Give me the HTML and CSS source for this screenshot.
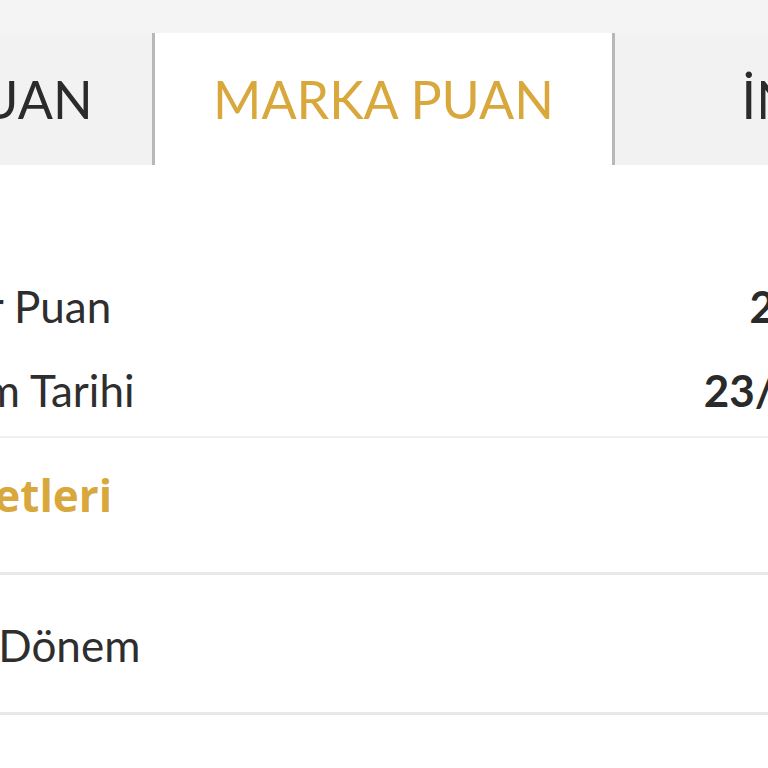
FILE: index.html
```html
<!DOCTYPE html>
<html lang="tr">
  <head>
    <meta charset='utf-8'>
    <meta name='viewport' content='width=device-width, initial-scale=1'>
    <title>Marka Puan</title>
<link rel="stylesheet" href="styles.css">
</head>
<body>

<div class="frame">
  <div class="page">

    <div class="topbar"></div>

    <nav class="tabs">
      <div class="tab">BONUS PUAN</div>
      <div class="tab active">MARKA PUAN</div>
      <div class="tab">İNDİRİM</div>
    </nav>

    <main>
      <div class="summary">
        <div class="row">
          <span class="label">Kullanılabilir Puan</span>
          <span class="value">22.450,00</span>
        </div>
        <div class="row">
          <span class="label">Son Kullanım Tarihi</span>
          <span class="value">23/12/2024</span>
        </div>
      </div>

      <div class="section">
        <span class="section-title">Son Hareketleri</span>
      </div>

      <div class="period">
        <span class="label">Bir Önceki Dönem</span>
      </div>
    </main>

  </div>
</div>

</body></html>
```

FILE: styles.css
```css
body {
    margin: 0;
    color: #2e2e2e;
    background-color: #ffffff;
    font-family: Lato, "Open Sans", sans-serif;
}

/* the visible window onto the wider page */
.frame {
    width: 768px;
    height: 768px;
    overflow: hidden;
}

.page {
    width: 1377px;
    margin-left: -305px;
}

.topbar {
    height: 33px;
    background-color: #f4f4f4;
}

/* Tabs */
.tabs {
    display: flex;
    background-color: #f2f2f2;
}

.tab {
    width: 457px;
    height: 132px;
    line-height: 132px;
    text-align: center;
    font-size: 52px;
    color: #2b2b2b;
    background-color: #f2f2f2;
}

.tab + .tab {
    border-left: 3px solid #b8b8b8;
}

.tab.active {
    color: #d8a83c;
    background-color: #ffffff;
}

/* Rows */
main {
    padding: 0 123px 0 74px;
    font-size: 44px;
    line-height: 84px;
}

.summary {
    padding: 99px 0 4px 0;
    border-bottom: 2px solid #efefef;
}

.row {
    display: flex;
    justify-content: space-between;
}

.value {
    font-weight: bold;
    color: #2a2a2a;
}

.section {
    padding: 15px 0 35px 0;
    border-bottom: 3px solid #e8e8e8;
}

.section-title {
    font-family: "Open Sans", Lato, sans-serif;
    font-weight: bold;
    color: #d8a83c;
}

.period {
    padding: 28px 0 25px 17px;
    border-bottom: 3px solid #e8e8e8;
}
```
